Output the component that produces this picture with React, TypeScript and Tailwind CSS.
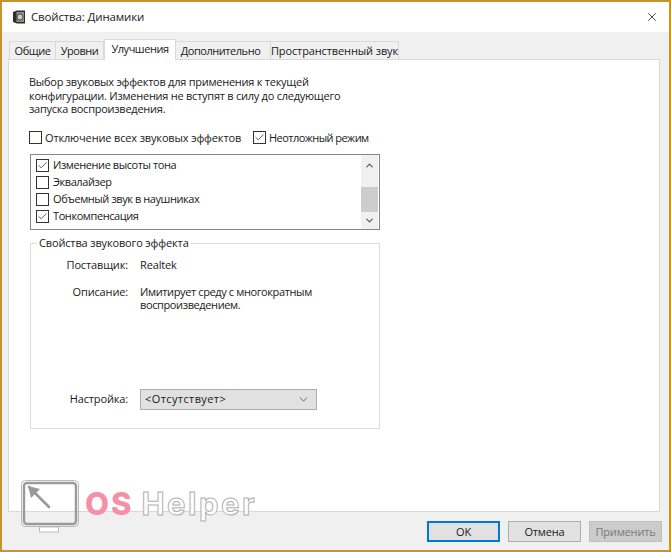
import React from "react";
import { X, Check, ChevronUp, ChevronDown } from "lucide-react";

const tabs = [
  { label: "Общие", w: "w-[47px]" },
  { label: "Уровни", w: "w-[48px]" },
  { label: "Улучшения", w: "w-[72px]", active: true },
  { label: "Дополнительно", w: "w-[95px] pr-[5px]" },
  { label: "Пространственный звук", w: "w-[128px] tracking-[-0.12px]" },
];

const effects = [
  { label: "Изменение высоты тона", on: true },
  { label: "Эквалайзер", on: false },
  { label: "Объемный звук в наушниках", on: false },
  { label: "Тонкомпенсация", on: true },
];

function Box({ on }: { on: boolean }) {
  return (
    <span className="w-[13px] h-[13px] shrink-0 border border-[#333] bg-white flex items-center justify-center">
      {on && <Check className="w-[11px] h-[11px] text-[#222]" strokeWidth={1.6} />}
    </span>
  );
}

function Watermark() {
  return (
    <div className="absolute left-[18px] top-[477px] flex items-start">
      <svg width="60" height="54" viewBox="0 0 60 54" fill="none">
        <rect x="1.5" y="1.5" width="57" height="46" rx="4" stroke="#b9b9b9" strokeWidth="1" />
        <rect x="4" y="4" width="52" height="41" rx="3" stroke="#9a9a9a" strokeWidth="2.4" />
        <path d="M9 8 L29 28" stroke="#999" strokeWidth="2.6" strokeLinecap="round" />
        <path d="M8 7 L20 10 L11 19 Z" fill="#999" />
        <rect x="19.5" y="48" width="19" height="5" stroke="#bbb" strokeWidth="1" fill="#fff" />
      </svg>
      <span className="ml-[5px] mt-[9px] text-[31px] leading-[32px] font-extrabold text-[#f590a6] font-['Inter',sans-serif] tracking-[2px]">
        OS
      </span>
      <span className="ml-[8px] mt-[9px] text-[31px] leading-[32px] font-bold text-white font-['Inter',sans-serif] tracking-[2.5px] [-webkit-text-stroke:1px_#b0b0b0]">
        Helper
      </span>
    </div>
  );
}

export default function App() {
  return (
    <div className="relative w-[671px] h-[552px] overflow-hidden border-2 border-[#c9922f] bg-[#f0f0f0] flex flex-col text-[11px] tracking-[-0.15px] leading-[13.5px] text-[#1a1a1a] font-['Open_Sans',sans-serif] whitespace-nowrap">
      <div className="h-[30px] shrink-0 bg-white flex items-center pl-[10px] pr-[8px]">
        <svg width="14" height="14" viewBox="0 0 14 14" className="shrink-0">
          <path d="M1 2 L5 0.5 H13 V13.5 H5 L1 12 Z" fill="#2e2e2e" />
          <rect x="4.5" y="2" width="7.5" height="10" fill="#8f8f8f" />
          <circle cx="8" cy="7" r="3" fill="#c9c9c9" stroke="#333" strokeWidth="0.8" />
        </svg>
        <span className="ml-[5px] text-[11.5px] text-[#222] leading-none">Свойства: Динамики</span>
        <X className="ml-auto mr-[2px] w-[14px] h-[14px] text-[#111]" strokeWidth={1.3} />
      </div>

      <div className="h-[27px] shrink-0 pl-[7px] pt-[7px] flex items-end tracking-[-0.45px]">
        {tabs.map((t) =>
          t.active ? (
            <div
              key={t.label}
              className={`${t.w} h-[21px] -mb-px z-10 bg-white border border-b-0 border-[#d9d9d9] flex items-center justify-center pb-[2px]`}
            >
              {t.label}
            </div>
          ) : (
            <div
              key={t.label}
              className={`${t.w} h-[18px] bg-[#f0f0f0] border border-b-0 border-l-0 first:border-l border-[#d9d9d9] flex items-center justify-center`}
            >
              {t.label}
            </div>
          ),
        )}
      </div>

      <div className="w-[652px] h-[453px] shrink-0 ml-[6px] bg-white border border-[#d9d9d9] pl-[20px] pt-[15px]">
        <p className="tracking-[-0.25px]">
          Выбор звуковых эффектов для применения к текущей
          <br />
          конфигурации. Изменения не вступят в силу до следующего
          <br />
          запуска воспроизведения.
        </p>

        <div className="mt-[15px] flex items-center h-[14px]">
          <Box on={false} />
          <span className="ml-[3px] w-[208px]">Отключение всех звуковых эффектов</span>
          <Box on />
          <span className="ml-[3px] tracking-[-0.55px]">Неотложный режим</span>
        </div>

        <div className="mt-[9px] ml-px w-[350px] h-[76px] border border-[#828790] bg-white flex">
          <div className="flex-1 pl-[5px] pt-[2px] tracking-[-0.42px]">
            {effects.map((e) => (
              <div key={e.label} className="h-[17px] flex items-center">
                <Box on={e.on} />
                <span className="ml-[4px]">{e.label}</span>
              </div>
            ))}
          </div>
          <div className="w-[17px] mr-px bg-[#f0f0f0] flex flex-col text-[#555]">
            <div className="h-[17px] mt-[2px] flex items-center justify-center">
              <ChevronUp className="w-[11px] h-[11px]" strokeWidth={2.5} />
            </div>
            <div className="flex-1 pt-[13px]">
              <div className="h-[25px] bg-[#cdcdcd]" />
            </div>
            <div className="h-[17px] flex items-center justify-center">
              <ChevronDown className="w-[11px] h-[11px]" strokeWidth={2.5} />
            </div>
          </div>
        </div>

        <div className="relative mt-[13px] ml-px w-[350px] h-[186px] border border-[#dcdcdc]">
          <span className="absolute left-[6px] -top-[8px] bg-white px-[2px]">Свойства звукового эффекта</span>
          <div className="pt-[14px] flex flex-col">
            <div className="flex h-[13px]">
              <span className="w-[109px] text-right pr-[12px]">Поставщик:</span>
              <span>Realtek</span>
            </div>
            <div className="flex mt-[14px]">
              <span className="w-[109px] text-right pr-[12px]">Описание:</span>
              <span className="tracking-[-0.38px]">
                Имитирует среду с многократным
                <br />
                воспроизведением.
              </span>
            </div>
            <div className="flex items-center mt-[77px]">
              <span className="w-[109px] text-right pr-[12px]">Настройка:</span>
              <div className="w-[177px] h-[21px] bg-[#e1e1e1] border border-[#adadad] flex items-center pl-[4px] pr-[6px] justify-between">
                <span className="tracking-[0.4px]">&lt;Отсутствует&gt;</span>
                <ChevronDown className="w-[13px] h-[13px] text-[#333]" strokeWidth={1.3} />
              </div>
            </div>
          </div>
        </div>
      </div>

      <div className="flex-1 flex items-center justify-end gap-[8px] pr-[7px] pt-[1px]">
        <div className="w-[73px] h-[21px] bg-[#e1e1e1] border-2 border-[#0078d7] flex items-center justify-center">OK</div>
        <div className="w-[73px] h-[21px] bg-[#e1e1e1] border border-[#adadad] flex items-center justify-center">Отмена</div>
        <div className="w-[73px] h-[21px] bg-[#cccccc] border border-[#bfbfbf] text-[#7a7a7a] flex items-center justify-center">Применить</div>
      </div>

      <Watermark />
    </div>
  );
}
